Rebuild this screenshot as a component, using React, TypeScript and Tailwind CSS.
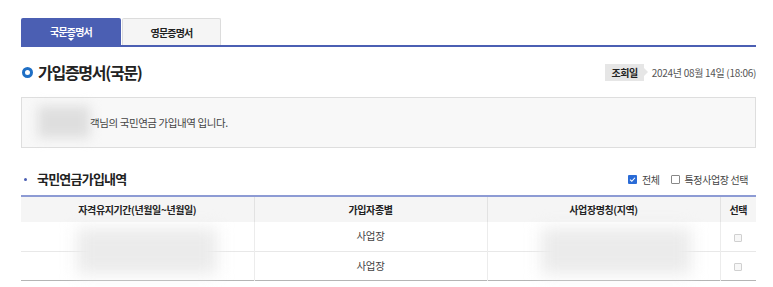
import React from 'react';

const font = { fontFamily: '"Noto Sans CJK KR", "Noto Sans", sans-serif' };

const rows = ['사업장', '사업장'];

export default function App() {
  return (
    <div className="bg-white w-[773px] h-[287px] overflow-hidden text-[#333]" style={font}>
      <div className="ml-[21px] w-[735px] pt-[18px]">
        {/* tabs */}
        <div className="flex border-b-2 border-[#4b5fb3] h-[29px]">
          <div className="relative w-[100px] bg-[#4b5fb3] text-white text-[10px] font-bold tracking-[-0.08em] flex items-center justify-center rounded-t-[2px]">
            국문증명서
            <span className="absolute bottom-[4px] left-1/2 -translate-x-1/2 w-0 h-0 border-l-[3px] border-r-[3px] border-t-[3px] border-l-transparent border-r-transparent border-t-white" />
          </div>
          <div className="ml-[1px] w-[99px] bg-[#f5f5f5] border border-b-0 border-[#dcdcdc] text-[#222] text-[10px] font-bold tracking-[-0.08em] flex items-center justify-center rounded-t-[2px]">
            영문증명서
          </div>
        </div>

        {/* title */}
        <div className="flex items-center justify-between mt-[14px] h-[22px]">
          <div className="flex items-center">
            <span className="w-[11px] h-[11px] rounded-full border-[3px] border-[#1f6fc5] ml-[1px]" />
            <h1 className="ml-[5px] text-[16px] font-bold text-[#222] tracking-[-0.08em]">가입증명서(국문)</h1>
          </div>
          <div className="flex items-center">
            <span className="relative bg-[#e6e6e6] text-[#222] text-[10px] font-bold h-[17px] px-[6px] flex items-center tracking-[-0.04em]">
              조회일
              <span className="absolute right-[-4px] top-1/2 -translate-y-1/2 w-0 h-0 border-t-[4px] border-b-[4px] border-l-[4px] border-t-transparent border-b-transparent border-l-[#e6e6e6]" />
            </span>
            <span className="ml-[8px] text-[10px] text-[#555] tracking-[-0.03em]">2024년 08월 14일 (18:06)</span>
          </div>
        </div>

        {/* info box */}
        <div className="relative mt-[14px] h-[51px] border border-[#dedede] bg-[#f8f8f8] flex items-center pl-[68px] text-[10.5px] text-[#444] tracking-[-0.04em]">
          <span className="absolute left-[16px] top-[8px] w-[52px] h-[32px] bg-[#dedede] blur-[6px]" />
          <span className="relative">객님의 국민연금 가입내역 입니다.</span>
        </div>

        {/* section title */}
        <div className="flex items-center justify-between mt-[20px] h-[22px]">
          <div className="flex items-center">
            <span className="ml-[3px] w-[3px] h-[3px] rounded-full bg-[#4b5fb3]" />
            <h2 className="ml-[10px] text-[13px] font-bold text-[#222] tracking-[-0.06em]">국민연금가입내역</h2>
          </div>
          <div className="flex items-center text-[10px] text-[#444] tracking-[-0.04em] mr-[8px]">
            <span className="w-[9px] h-[9px] rounded-[1px] bg-[#2a6bd6] flex items-center justify-center">
              <svg viewBox="0 0 10 10" className="w-[7px] h-[7px]">
                <path d="M1.5 5.2 L4 7.5 L8.5 2.5" fill="none" stroke="white" strokeWidth="1.6" />
              </svg>
            </span>
            <span className="ml-[5px]">전체</span>
            <span className="ml-[11px] w-[9px] h-[9px] rounded-[1px] border border-[#888] bg-white" />
            <span className="ml-[5px]">특정사업장 선택</span>
          </div>
        </div>

        {/* table */}
        <div className="relative mt-[5px]">
          <table className="w-full border-collapse border-t-2 border-[#8d9bd4] border-b border-b-[#b5b5b5] text-[10px] tracking-[-0.04em]">
            <thead>
              <tr className="bg-[#f5f5f5] h-[26px] text-[#222] font-bold">
                <th className="w-[233px] border-r border-[#e2e2e2] font-bold">자격유지기간(년월일~년월일)</th>
                <th className="w-[233px] border-r border-[#e2e2e2] font-bold">가입자종별</th>
                <th className="w-[233px] border-r border-[#e2e2e2] font-bold">사업장명칭(지역)</th>
                <th className="font-bold">선택</th>
              </tr>
            </thead>
            <tbody>
              {rows.map((r, i) => (
                <tr key={i} className={`h-[29px] ${i === 0 ? 'border-b border-[#e8e8e8]' : ''}`}>
                  <td className="border-r border-[#ececec]" />
                  <td className="border-r border-[#ececec] text-center text-[#444] text-[10.5px]">{r}</td>
                  <td className="border-r border-[#ececec]" />
                  <td className="text-center">
                    <span className="inline-block w-[8px] h-[8px] rounded-[1px] border border-[#d0d0d0] bg-[#f7f7f7] align-middle" />
                  </td>
                </tr>
              ))}
            </tbody>
          </table>
          <span className="absolute left-[56px] top-[33px] w-[140px] h-[46px] bg-[#ebebeb] blur-[8px]" />
          <span className="absolute left-[520px] top-[33px] w-[150px] h-[46px] bg-[#ebebeb] blur-[8px]" />
        </div>
      </div>
    </div>
  );
}
